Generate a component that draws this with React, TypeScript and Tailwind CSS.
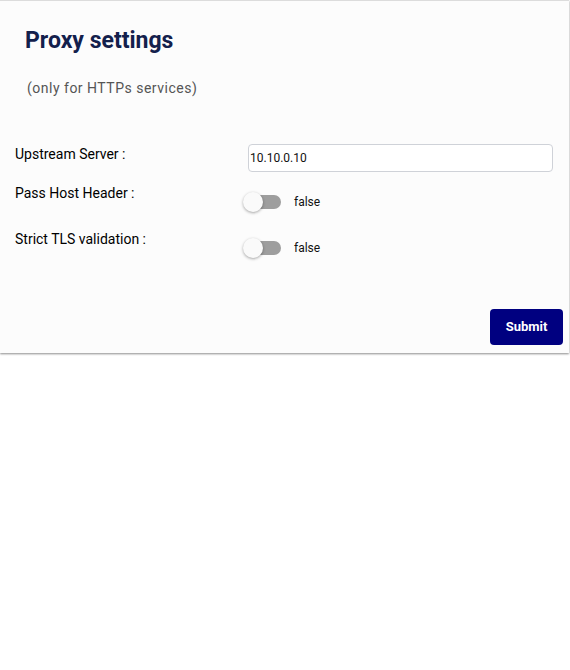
import React from "react";

function Toggle() {
  return (
    <div className="flex items-center">
      <div className="relative w-[40px] h-[20px] flex items-center">
        <div className="ml-[2px] w-[36px] h-[14px] rounded-full bg-[#9e9e9e]" />
        <div className="absolute left-0 top-0 w-[20px] h-[20px] rounded-full bg-[#fafafa] shadow-[0_1px_3px_rgba(0,0,0,0.35)]" />
      </div>
      <span className="ml-[11px] text-[12px] text-[#111]">false</span>
    </div>
  );
}

export default function App() {
  return (
    <div className="w-[570px] h-[670px] bg-white" style={{ fontFamily: "Roboto, 'Noto Sans', sans-serif" }}>
      <div className="w-[569px] bg-[#fcfcfc] border-t border-[#dcdcdc] shadow-[0_1px_2px_rgba(0,0,0,0.45)] pb-[8px]">
        <h1 className="pl-[25px] pt-[26px] text-[23px] leading-[28px] font-bold text-[#13204c]">Proxy settings</h1>
        <p className="pl-[27px] mt-[23px] text-[14px] leading-[20px] tracking-[0.5px] text-[#555]">(only for HTTPs services)</p>
        <div className="mt-[46px] flex items-start">
          <div className="w-[248px] pl-[15px] text-[14px] leading-[20px] font-normal text-[#000]">Upstream Server :</div>
          <input
            readOnly
            value="10.10.0.10"
            className="w-[305px] h-[28px] border border-[#cfd2d8] rounded-[4px] bg-white px-[1px] text-[12px] text-[#111] outline-none"
          />
        </div>
        <div className="mt-[11px] flex items-start">
          <div className="w-[243px] pl-[15px] text-[14px] leading-[20px] font-normal text-[#000]">Pass Host Header :</div>
          <div className="mt-[9px]"><Toggle /></div>
        </div>
        <div className="mt-[17px] flex items-start">
          <div className="w-[243px] pl-[15px] text-[14px] leading-[20px] font-normal text-[#000]">Strict TLS validation :</div>
          <div className="mt-[9px]"><Toggle /></div>
        </div>
        <div className="mt-[51px] flex justify-end pr-[6px]">
          <button className="w-[73px] h-[36px] rounded-[4px] bg-[#000080] text-white text-[13px] font-bold">Submit</button>
        </div>
      </div>
    </div>
  );
}
